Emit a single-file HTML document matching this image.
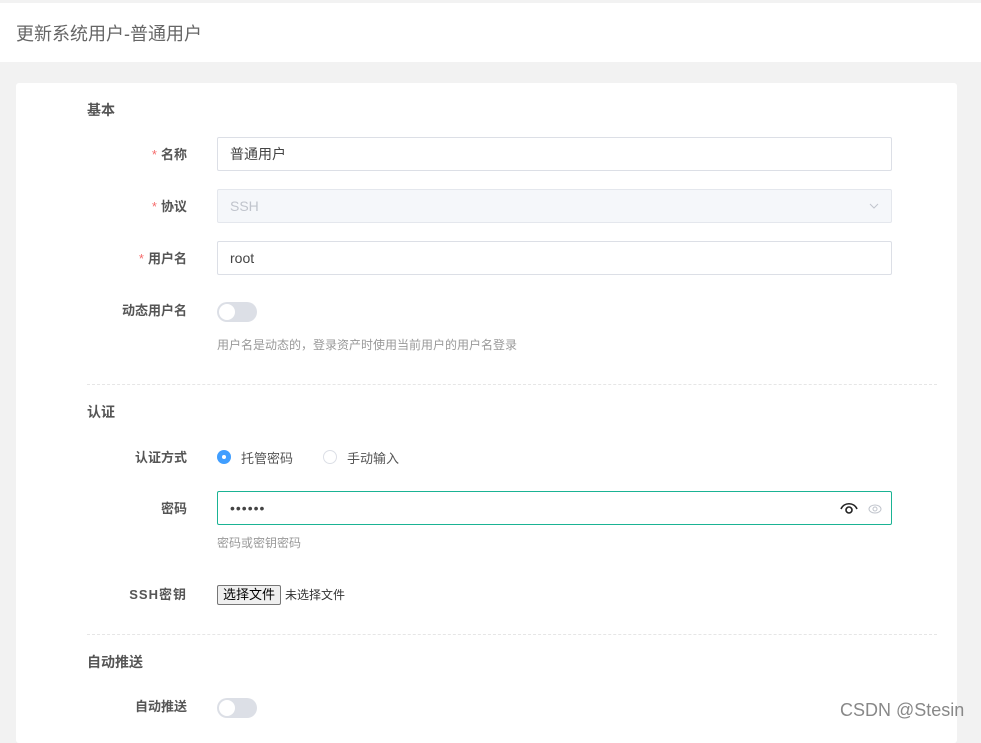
<!DOCTYPE html>
<html><head><meta charset="utf-8"><style>
*{box-sizing:border-box;margin:0;padding:0}
body{width:981px;height:729px;overflow:hidden;background:#f2f2f2;font-family:"Liberation Sans","Noto Sans CJK SC",sans-serif;position:relative;color:#606266}
.hdr{position:absolute;left:0;top:3px;width:981px;height:59px;background:#fff}
.hdr span{position:absolute;left:16px;top:17px;font-size:18px;color:#666}
.card{position:absolute;left:16px;top:83px;width:941px;height:660px;background:#fff;border-radius:3px}
.a{position:absolute}
.h{font-size:14px;font-weight:bold;color:#555;left:87px}
.lbl{font-size:13px;font-weight:bold;color:#555;width:187px;left:0;text-align:right}
.lbl i{color:#f56c6c;font-style:normal;font-weight:normal;margin-right:4px}
.in{left:217px;width:675px;height:34px;border:1px solid #dcdfe6;border-radius:2px;font-size:14px;padding:0 12px;line-height:32px;color:#444}
.tg{left:217px;width:40px;height:20px;border-radius:10px;background:#dcdfe6}
.tg:after{content:"";position:absolute;left:2px;top:2px;width:16px;height:16px;border-radius:50%;background:#fff}
.help{left:217px;font-size:12px;color:#999}
.dv{left:87px;width:850px;border-top:1px dashed #e6e6e6}
</style></head><body>
<div class="hdr"><span>更新系统用户-普通用户</span></div>
<div class="card"></div>
<div class="a h" style="top:100px">基本</div>
<div class="a lbl" style="top:144px"><i>*</i>名称</div>
<div class="a in" style="top:137px">普通用户</div>
<div class="a lbl" style="top:196px"><i>*</i>协议</div>
<div class="a in" style="top:189px;background:#f5f7fa;color:#c0c4cc;border-color:#e4e7ed">SSH<svg style="position:absolute;right:12px;top:13px" width="10" height="7" viewBox="0 0 10 7"><path d="M1 1l4 4 4-4" stroke="#c0c4cc" fill="none"/></svg></div>
<div class="a lbl" style="top:248px"><i>*</i>用户名</div>
<div class="a in" style="top:241px">root</div>
<div class="a lbl" style="top:300px">动态用户名</div>
<div class="a tg" style="top:302px"></div>
<div class="a help" style="top:336px">用户名是动态的，登录资产时使用当前用户的用户名登录</div>
<div class="a dv" style="top:384px"></div>
<div class="a h" style="top:402px">认证</div>
<div class="a lbl" style="top:447px">认证方式</div>
<div class="a" style="left:217px;top:450px;width:14px;height:14px;border-radius:50%;background:#409eff"><div style="position:absolute;left:5px;top:5px;width:4px;height:4px;border-radius:50%;background:#fff"></div></div>
<div class="a" style="left:241px;top:448px;font-size:13px;color:#555">托管密码</div>
<div class="a" style="left:323px;top:450px;width:14px;height:14px;border-radius:50%;border:1px solid #dcdfe6"></div>
<div class="a" style="left:347px;top:448px;font-size:13px;color:#555">手动输入</div>
<div class="a lbl" style="top:498px">密码</div>
<div class="a in" style="top:491px;border-color:#1ab394;letter-spacing:1px;font-size:14px">••••••
<svg style="position:absolute;left:622px;top:9px" width="18" height="14" viewBox="0 0 18 14"><path d="M1 8C4 1 14 1 17 8" stroke="#222" stroke-width="1.6" fill="none"/><circle cx="9" cy="9" r="3" stroke="#222" stroke-width="1.6" fill="none"/></svg>
<svg style="position:absolute;left:650px;top:12px" width="14" height="10" viewBox="0 0 14 10"><ellipse cx="7" cy="5" rx="6" ry="4" stroke="#c0c4cc" fill="none"/><circle cx="7" cy="5" r="2" stroke="#c0c4cc" fill="none"/></svg></div>
<div class="a help" style="top:534px">密码或密钥密码</div>
<div class="a lbl" style="top:584px;letter-spacing:1px">SSH密钥</div>
<div class="a" style="left:217px;top:585px;width:64px;height:20px;border:1px solid #767676;border-radius:2px;background:#efefef;font-size:13px;color:#000;text-align:center;line-height:18px">选择文件</div>
<div class="a" style="left:285px;top:586px;font-size:12px;color:#333">未选择文件</div>
<div class="a dv" style="top:634px"></div>
<div class="a h" style="top:652px">自动推送</div>
<div class="a lbl" style="top:696px">自动推送</div>
<div class="a tg" style="top:698px"></div>
<div class="a" style="left:840px;top:700px;font-size:18px;color:#888">CSDN @Stesin</div>
</body></html>
